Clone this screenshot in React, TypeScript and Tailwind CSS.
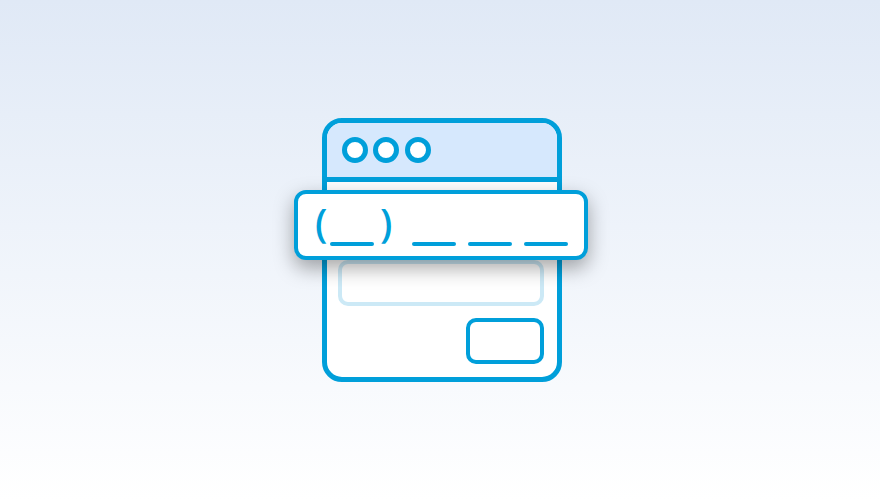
const bars = [1, 2, 3]

export default function App() {
  return (
    <div className="w-[880px] h-[500px] flex items-center justify-center pl-[4px] bg-gradient-to-b from-[#e0e9f6] to-white font-['Open_Sans',sans-serif]">
      <div className="relative w-[240px] h-[264px] border-[5px] border-[#009fda] rounded-[20px] bg-white flex flex-col">
        <div className="h-[59px] shrink-0 border-b-[5px] border-[#009fda] bg-[#d6e8fd] rounded-t-[15px] flex items-center gap-[5.5px] pl-[14.5px]">
          <span className="w-[26px] h-[26px] rounded-full border-[5.5px] border-[#009fda] bg-white"></span>
          <span className="w-[26px] h-[26px] rounded-full border-[5.5px] border-[#009fda] bg-white"></span>
          <span className="w-[26px] h-[26px] rounded-full border-[5.5px] border-[#009fda] bg-white"></span>
        </div>
        <div className="flex flex-col pt-[78px] pl-[11px] pr-[13px]">
          <div className="h-[46px] border-[4px] border-[#cce9f6] rounded-[10px]"></div>
          <div className="self-end w-[78px] h-[46px] mt-[12px] border-[4px] border-[#009fda] rounded-[10px]"></div>
        </div>

        <div className="absolute left-[-33px] top-[67px] w-[294px] h-[70px] border-[4px] border-[#009fda] rounded-[12px] bg-white shadow-[0_8px_20px_rgba(0,0,0,0.35)] flex items-end pl-[17px] pb-[10px] text-[#009fda]">
          <span className="w-[15px] text-[39px] font-semibold leading-[46px]">(</span>
          <span className="w-[44px] h-[4px] rounded-full bg-[#009fda]"></span>
          <span className="w-[14px] pl-[6px] text-[39px] font-semibold leading-[46px]">)</span>
          <div className="flex gap-[12px] ml-[24px]">
            {bars.map((b) => (
              <span key={b} className="w-[44px] h-[4px] rounded-full bg-[#009fda]"></span>
            ))}
          </div>
        </div>
      </div>
    </div>
  )
}
